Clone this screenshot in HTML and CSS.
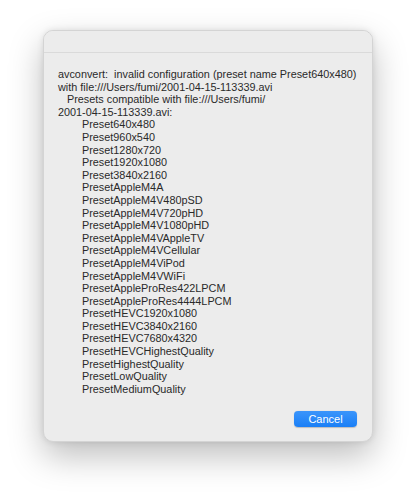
FILE: index.html
```html
<!DOCTYPE html>
<html>
<head>
<meta charset="utf-8">
<link rel="stylesheet" href="styles.css">
</head>
<body>
<div class="window">
  <div class="titlebar"></div>
  <div class="content">
    <div class="message">
      <div class="line">avconvert:&nbsp; invalid configuration (preset name Preset640x480)</div>
      <div class="line">with file:///Users/fumi/2001-04-15-113339.avi</div>
      <div class="line indent1">Presets compatible with file:///Users/fumi/</div>
      <div class="line">2001-04-15-113339.avi:</div>
      <div class="presets">
        <div class="line">Preset640x480</div>
        <div class="line">Preset960x540</div>
        <div class="line">Preset1280x720</div>
        <div class="line">Preset1920x1080</div>
        <div class="line">Preset3840x2160</div>
        <div class="line">PresetAppleM4A</div>
        <div class="line">PresetAppleM4V480pSD</div>
        <div class="line">PresetAppleM4V720pHD</div>
        <div class="line">PresetAppleM4V1080pHD</div>
        <div class="line">PresetAppleM4VAppleTV</div>
        <div class="line">PresetAppleM4VCellular</div>
        <div class="line">PresetAppleM4ViPod</div>
        <div class="line">PresetAppleM4VWiFi</div>
        <div class="line">PresetAppleProRes422LPCM</div>
        <div class="line">PresetAppleProRes4444LPCM</div>
        <div class="line">PresetHEVC1920x1080</div>
        <div class="line">PresetHEVC3840x2160</div>
        <div class="line">PresetHEVC7680x4320</div>
        <div class="line">PresetHEVCHighestQuality</div>
        <div class="line">PresetHighestQuality</div>
        <div class="line">PresetLowQuality</div>
        <div class="line">PresetMediumQuality</div>
      </div>
    </div>
    <div class="buttons">
      <button class="btn-primary">Cancel</button>
    </div>
  </div>
</div>
</body>
</html>
```
FILE: styles.css
```css
html, body {
  margin: 0;
  padding: 0;
  background: #ffffff;
}
body {
  width: 418px;
  height: 500px;
  padding-top: 30px;
  padding-left: 43px;
  box-sizing: border-box;
  font-family: "Liberation Sans", Arial, sans-serif;
}
.window {
  width: 330px;
  height: 412px;
  background: #ececec;
  border-radius: 10px;
  border: 1px solid #d4d4d4;
  box-sizing: border-box;
  box-shadow: 0 14px 34px rgba(0, 0, 0, 0.26), 0 0 6px rgba(0, 0, 0, 0.1);
  display: flex;
  flex-direction: column;
  overflow: hidden;
}
.titlebar {
  height: 21px;
  border-bottom: 1px solid #dadada;
  background: #ececec;
}
.content {
  flex: 1;
  display: flex;
  flex-direction: column;
  padding: 15px 15px 14px 14px;
}
.message {
  flex: 1;
  font-size: 10.85px;
  line-height: 12.6px;
  color: #2a2a2a;
}
.line {
  white-space: nowrap;
}
.indent1 {
  padding-left: 9px;
}
.presets {
  padding-left: 24px;
}
.buttons {
  display: flex;
  justify-content: flex-end;
}
.btn-primary {
  width: 63px;
  height: 16px;
  border: none;
  border-radius: 4px;
  background: linear-gradient(#3b95fb, #1a7ff6);
  color: #ffffff;
  font-family: "Liberation Sans", Arial, sans-serif;
  font-size: 11px;
  line-height: 16px;
  padding: 0;
  box-shadow: 0 0.5px 1px rgba(0, 0, 0, 0.2);
}
```
